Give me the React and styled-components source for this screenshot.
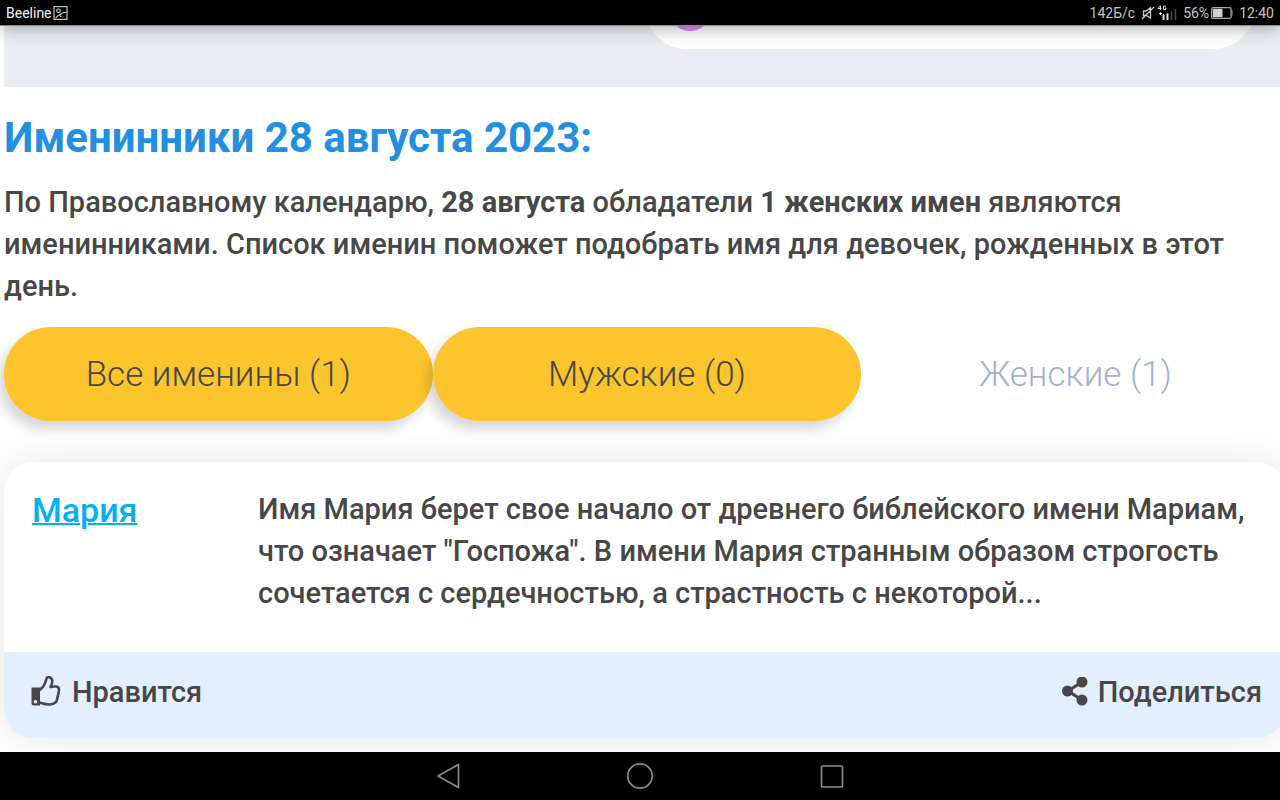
import React from "react";
import styled, { createGlobalStyle } from "styled-components";

const GlobalStyle = createGlobalStyle`
  *, *::before, *::after { box-sizing: border-box; }
  body {
    margin: 0;
    background: #fff;
    color: #474747;
    font-family: Roboto, "Noto Sans", sans-serif;
    overflow-x: hidden;
  }
`;

const Screen = styled.div`
  display: flex;
  flex-direction: column;
  min-height: 100vh;
  overflow: hidden;
`;

const StatusBar = styled.header`
  position: relative;
  z-index: 1;
  display: flex;
  align-items: center;
  justify-content: space-between;
  height: 26px;
  padding: 0 6px;
  background: #000;
  border-bottom: 1px solid #8c8c8c;
  box-shadow: 0 0 20px rgba(0, 0, 0, 0.4);
  color: #c4c4c4;
  font-size: 14px;
  line-height: 24px;
`;

const StatusGroup = styled.div`
  display: flex;
  align-items: center;
  gap: ${(p) => p.$gap}px;
`;

const Carrier = styled.span`
  color: #f4f4f4;
`;

const Content = styled.main`
  flex: 1;
  padding: 0 4px 14px;
`;

const Banner = styled.section`
  display: flex;
  justify-content: flex-end;
  height: 61px;
  margin-right: -4px;
  padding-right: 26px;
  background: #eaedf2;
  overflow: hidden;
`;

const BannerCard = styled.div`
  flex: 0 0 calc(50% - 17px);
  height: 80px;
  margin-top: -57px;
  padding: 20px 23px 0;
  background: #fff;
  border-radius: 40px;
`;

const Avatar = styled.div`
  width: 42px;
  height: 42px;
  border-radius: 50%;
  background: #d98cf2;
`;

const Title = styled.h1`
  margin: 26px 0 18px;
  color: #228fe0;
  font-size: 42px;
  font-weight: 700;
  line-height: 50px;
`;

const Text = styled.p`
  margin: 0;
  font-size: 29px;
  font-weight: 500;
  line-height: 42px;
`;

const Tabs = styled.nav`
  display: flex;
  margin: 20px -14px 41px 0;
`;

const Tab = styled.button`
  flex: 1;
  height: 94px;
  padding: 0;
  border: 0;
  border-radius: 47px;
  background: ${(p) => (p.$plain ? "transparent" : "#fdc52d")};
  box-shadow: ${(p) => (p.$plain ? "none" : "-6px 8px 12px rgba(0, 0, 0, 0.16)")};
  color: ${(p) => (p.$plain ? "#a5b3c7" : "#474747")};
  font-family: inherit;
  font-size: 35px;
  font-weight: 300;
`;

const Card = styled.article`
  margin-right: -10px;
  border-radius: 30px;
  background: #fff;
  box-shadow: 0 0 40px rgba(0, 0, 0, 0.1);
  overflow: hidden;
`;

const CardBody = styled.div`
  display: grid;
  grid-template-columns: 198px 1fr;
  column-gap: 28px;
  align-items: start;
  padding: 26px 28px 38px;
`;

const NameLink = styled.a`
  color: #03b0f4;
  font-size: 34px;
  font-weight: 500;
  line-height: 44px;
  text-decoration-thickness: 2px;
`;

const CardFooter = styled.footer`
  display: flex;
  align-items: center;
  justify-content: space-between;
  height: 86px;
  padding: 0 24px 6px 27px;
  background: #e3eeff;
`;

const Action = styled.button`
  display: flex;
  align-items: center;
  gap: 10px;
  padding: 0;
  border: 0;
  background: none;
  color: inherit;
  font-family: inherit;
  font-size: 29px;
  font-weight: 500;
  line-height: 42px;
`;

const NavBar = styled.nav`
  position: relative;
  display: flex;
  align-items: center;
  justify-content: center;
  gap: 160px;
  height: 48px;
  background: #000;
`;

const NavButton = styled.button`
  display: flex;
  padding: 0;
  border: 0;
  background: none;
`;

const PictureIcon = () => (
  <svg width="15" height="14" viewBox="0 0 15 14" fill="none" stroke="#c4c4c4" strokeWidth="1.200" aria-hidden="true">
    <rect x="1" y="0.600" width="13" height="12.800" />
    <circle cx="5.500" cy="4.800" r="1.800" />
    <path d="M2.500 12C4.500 11 4 9 6.500 9C8.500 7 10 6 13.500 6M6.500 9L8 11" />
  </svg>
);

const MuteIcon = () => (
  <svg width="14" height="14" viewBox="0 0 14 14" fill="none" stroke="#c4c4c4" strokeWidth="1.300" aria-hidden="true">
    <path d="M2.500 5H5L9.500 1.800V12L5.500 9.500H2.500ZM1 13L13 1" />
  </svg>
);

const SignalIcon = () => (
  <svg width="20" height="16" viewBox="0 0 20 16" fill="none" aria-hidden="true">
    <path d="M3.500 5V0.700L1 3.500H4.500M9 1.200H6.500V4.500H9V3H8" stroke="#ddd" />
    <path d="M3.500 7V10M2 8.500H5M6.500 9V13M5 11H8" stroke="#ddd" />
    <path d="M6.500 12V15" stroke="#ddd" strokeWidth="2" />
    <path d="M10.500 8.500V15" stroke="#ddd" strokeWidth="2" />
    <path d="M14.500 6.500V15M18.500 4V15" stroke="#4a4a4a" strokeWidth="1.500" />
  </svg>
);

const BatteryIcon = () => (
  <svg width="22" height="12" viewBox="0 0 22 12" fill="none" aria-hidden="true">
    <rect x="0.600" y="0.600" width="19.500" height="10.800" rx="1.500" stroke="#aaa" strokeWidth="1.200" />
    <rect x="1.800" y="1.800" width="9.700" height="8.400" fill="#d0d0d0" />
    <path d="M21 3.500V8.500" stroke="#aaa" />
  </svg>
);

const ShareIcon = () => (
  <svg width="26" height="30" viewBox="0 1 26 30" fill="currentColor" aria-hidden="true">
    <path d="M20 6L6 15L20 24" fill="none" stroke="currentColor" strokeWidth="3.200" />
    <circle cx="20" cy="6" r="5.500" />
    <circle cx="5.500" cy="15" r="5.500" />
    <circle cx="20" cy="24" r="5.500" />
  </svg>
);

const LikeIcon = () => (
  <svg width="31" height="32" viewBox="0 1 31 32" fill="none" stroke="currentColor" aria-hidden="true">
    <path d="M8.500 15C12 13 14 9 15 5C15.500 2.500 17 1.500 18.500 2.200C22 3.500 22 7.500 19.500 12C23 11.200 28 10.800 28 14.500C28 16 27.300 19 26.500 22.500C25.800 26 25.500 28.500 20.500 29.300C16 30 12 28.500 8.500 27.500" strokeWidth="2.600" strokeLinejoin="round" />
    <path fillRule="evenodd" d="M0.500 13Q0.500 12.500 1 12.500H9V30.500H2.500Q0.500 30.500 0.500 28.500ZM4.500 25A1.800 1.800 0 1 0 4.500 28.600A1.800 1.800 0 1 0 4.500 25Z" fill="currentColor" stroke="none" />
  </svg>
);

export default function App() {
  return (
    <Screen>
      <GlobalStyle />
      <StatusBar>
        <StatusGroup $gap={1}>
          <Carrier>Beeline</Carrier>
          <PictureIcon />
        </StatusGroup>
        <StatusGroup $gap={6}>
          <span>142Б/с</span>
          <StatusGroup $gap={2}>
            <MuteIcon />
            <SignalIcon />
          </StatusGroup>
          <StatusGroup $gap={2}>
            <span>56%</span>
            <BatteryIcon />
          </StatusGroup>
          <span>12:40</span>
        </StatusGroup>
      </StatusBar>
      <Content>
        <Banner>
          <BannerCard>
            <Avatar />
          </BannerCard>
        </Banner>
        <Title>Именинники 28 августа 2023:</Title>
        <Text>
          По Православному календарю, <b>28 августа</b> обладатели <b>1 женских имен</b> являются
          именинниками. Список именин поможет подобрать имя для девочек, рожденных в этот день.
        </Text>
        <Tabs>
          <Tab>Все именины (1)</Tab>
          <Tab>Мужские (0)</Tab>
          <Tab $plain>Женские (1)</Tab>
        </Tabs>
        <Card>
          <CardBody>
            <NameLink href="#maria">Мария</NameLink>
            <Text>
              Имя Мария берет свое начало от древнего библейского имени Мариам, что означает
              "Госпожа". В имени Мария странным образом строгость сочетается с сердечностью, а
              страстность с некоторой...
            </Text>
          </CardBody>
          <CardFooter>
            <Action>
              <LikeIcon />
              Нравится
            </Action>
            <Action>
              <ShareIcon />
              Поделиться
            </Action>
          </CardFooter>
        </Card>
      </Content>
      <NavBar>
        <NavButton aria-label="Назад">
          <svg width="32" height="28" viewBox="0 0 32 28" fill="none" stroke="#8c8c8c" strokeWidth="1.700" strokeLinejoin="round">
            <path d="M6 14L26.500 2.500V25.500Z" />
          </svg>
        </NavButton>
        <NavButton aria-label="Домой">
          <svg width="32" height="28" viewBox="0 0 32 28" fill="none" stroke="#8c8c8c" strokeWidth="1.700">
            <circle cx="16" cy="14" r="12.200" />
          </svg>
        </NavButton>
        <NavButton aria-label="Недавние">
          <svg width="32" height="28" viewBox="0 0 32 28" fill="none" stroke="#8c8c8c" strokeWidth="1.700">
            <rect x="5.500" y="4" width="21" height="21" rx="1" />
          </svg>
        </NavButton>
      </NavBar>
    </Screen>
  );
}
